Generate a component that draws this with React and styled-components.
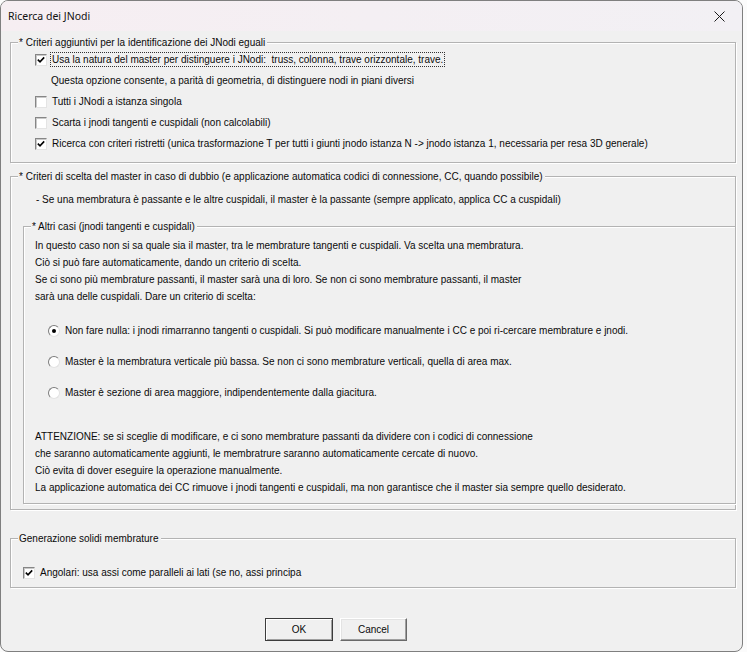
import styled, { createGlobalStyle } from "styled-components";

const GlobalStyle = createGlobalStyle`
  html, body {
    margin: 0;
    padding: 0;
  }
  body {
    background: #fbfbfb;
    font-family: "Liberation Sans", Arial, sans-serif;
    color: #000;
  }
  * {
    box-sizing: border-box;
  }
`;

const Window = styled.div`
  width: 743px;
  height: 652px;
  border: 1px solid #7f7f7f;
  border-radius: 8px;
  overflow: hidden;
  display: flex;
  flex-direction: column;
  background: #f0f0f0;
`;

const TitleBar = styled.div`
  height: 30px;
  flex: none;
  display: flex;
  align-items: center;
  justify-content: space-between;
  padding-left: 7px;
  background: linear-gradient(90deg, #f6eef2, #f2f0f4);
`;

const Title = styled.span`
  font-family: "Noto Sans", "Liberation Sans", sans-serif;
  font-size: 10.5px;
  color: #111;
`;

const CloseButton = styled.div`
  width: 46px;
  height: 30px;
  display: flex;
  align-items: center;
  justify-content: center;
`;

const Body = styled.div`
  flex: 1;
  display: flex;
  flex-direction: column;
  padding: 0 6px 0 9px;
  font-size: 10px;
  color: #0a0a0a;
`;

const Group = styled.fieldset`
  margin: ${(p) => p.$mt}px ${(p) => p.$mr || 0}px 0 0;
  padding: 0;
  min-width: 0;
  border: 1px solid #b3b3b3;
  box-shadow: inset 1px 1px 0 #fff, 1px 1px 0 #fff;
`;

const Legend = styled.legend`
  margin-left: 7px;
  padding: 0 2px 0 1px;
  line-height: 13px;
  background: #f0f0f0;
`;

const GroupContent = styled.div`
  padding: ${(p) => p.$pt}px 0 ${(p) => p.$pb}px ${(p) => p.$pl}px;
  display: flex;
  flex-direction: column;
`;

const Row = styled.div`
  height: ${(p) => p.$h || 21}px;
  display: flex;
  align-items: center;
  padding-left: ${(p) => p.$indent || 0}px;
  white-space: nowrap;
`;

const TextLine = styled.div`
  height: 17px;
  line-height: 17px;
  white-space: nowrap;
  padding-left: ${(p) => p.$indent || 0}px;
`;

const Paragraph = styled.div`
  margin-top: ${(p) => p.$mt || 0}px;
`;

const Box = styled.span`
  width: 12px;
  height: 12px;
  flex: none;
  margin-right: 4px;
  background: #fff;
  border: 1px solid;
  border-color: #868686 #e4e4e4 #e4e4e4 #868686;
  box-shadow: inset 1px 1px 0 #c9c9c9;
  display: flex;
  align-items: center;
  justify-content: center;
`;

const Radio = styled.span`
  width: 12px;
  height: 12px;
  flex: none;
  margin-right: 4px;
  border-radius: 50%;
  background: #fff;
  border: 1px solid;
  border-color: #7c7c7c #e2e2e2 #e2e2e2 #7c7c7c;
  display: flex;
  align-items: center;
  justify-content: center;
  &::after {
    content: "";
    width: 4px;
    height: 4px;
    border-radius: 50%;
    background: ${(p) => (p.$on ? "#000" : "transparent")};
  }
`;

const Label = styled.span`
  line-height: 13px;
  padding: 0 1px;
  outline: ${(p) => (p.$focus ? "1px dotted #333" : "none")};
  outline-offset: 0;
`;

const Buttons = styled.div`
  margin-top: 30px;
  padding-left: 255px;
  display: flex;
  gap: 7px;
`;

const Button = styled.div`
  width: ${(p) => p.$w}px;
  height: 23px;
  display: flex;
  align-items: center;
  justify-content: center;
  background: #f0f0f0;
  border: 1px solid;
  border-color: ${(p) =>
    p.$default ? "#3c3c3c" : "#ffffff #696969 #696969 #ffffff"};
  box-shadow: ${(p) =>
    p.$default
      ? "inset 1px 1px 0 #fff, inset -1px -1px 0 #a0a0a0"
      : "inset -1px -1px 0 #a0a0a0, inset 1px 1px 0 #e3e3e3"};
`;

function Check({ checked }) {
  return (
    <Box>
      {checked && (
        <svg width="8" height="8" viewBox="0 0 8 8">
          <path d="M0.8 3.6 L3 5.8 L7.2 1.4" fill="none" stroke="#000" strokeWidth="1.6" />
        </svg>
      )}
    </Box>
  );
}

function CheckRow({ checked, focus, children }) {
  return (
    <Row>
      <Check checked={checked} />
      <Label $focus={focus}>{children}</Label>
    </Row>
  );
}

function RadioRow({ on, children }) {
  return (
    <Row $h={31} $indent={13}>
      <Radio $on={on} />
      <Label>{children}</Label>
    </Row>
  );
}

export default function App() {
  return (
    <>
      <GlobalStyle />
      <Window>
        <TitleBar>
          <Title>Ricerca dei JNodi</Title>
          <CloseButton>
            <svg width="11" height="11" viewBox="0 0 11 11">
              <path d="M0.5 0.5 L10.5 10.5 M10.5 0.5 L0.5 10.5" stroke="#1a1a1a" strokeWidth="1" />
            </svg>
          </CloseButton>
        </TitleBar>
        <Body>
          <Group $mt={5}>
            <Legend>* Criteri aggiuntivi per la identificazione dei JNodi eguali</Legend>
            <GroupContent $pt={0} $pb={8} $pl={24}>
              <CheckRow checked focus>
                Usa la natura del master per distinguere i JNodi:&nbsp; truss, colonna, trave orizzontale, trave.
              </CheckRow>
              <Row $indent={16}>
                Questa opzione consente, a parità di geometria, di distinguere nodi in piani diversi
              </Row>
              <CheckRow>Tutti i JNodi a istanza singola</CheckRow>
              <CheckRow>Scarta i jnodi tangenti e cuspidali (non calcolabili)</CheckRow>
              <CheckRow checked>
                Ricerca con criteri ristretti (unica trasformazione T per tutti i giunti jnodo istanza N -&gt; jnodo istanza 1, necessaria per resa 3D generale)
              </CheckRow>
            </GroupContent>
          </Group>

          <Group $mt={7}>
            <Legend>
              * Criteri di scelta del master in caso di dubbio (e applicazione automatica codici di connessione, CC, quando possibile)
            </Legend>
            <GroupContent $pt={8} $pb={5} $pl={12}>
              <TextLine $indent={13}>
                - Se una membratura è passante e le altre cuspidali, il master è la passante (sempre applicato, applica CC a cuspidali)
              </TextLine>
              <Group $mt={12} $mr={-1}>
                <Legend>* Altri casi (jnodi tangenti e cuspidali)</Legend>
                <GroupContent $pt={4} $pb={7} $pl={11}>
                  <Paragraph>
                    <TextLine>
                      In questo caso non si sa quale sia il master, tra le membrature tangenti e cuspidali. Va scelta una membratura.
                    </TextLine>
                    <TextLine>Ciò si può fare automaticamente, dando un criterio di scelta.</TextLine>
                    <TextLine>
                      Se ci sono più membrature passanti, il master sarà una di loro. Se non ci sono membrature passanti, il master
                    </TextLine>
                    <TextLine>sarà una delle cuspidali. Dare un criterio di scelta:</TextLine>
                  </Paragraph>
                  <Paragraph $mt={10}>
                    <RadioRow on>
                      Non fare nulla: i jnodi rimarranno tangenti o cuspidali. Si può modificare manualmente i CC e poi ri-cercare membrature e jnodi.
                    </RadioRow>
                    <RadioRow>
                      Master è la membratura verticale più bassa. Se non ci sono membrature verticali, quella di area max.
                    </RadioRow>
                    <RadioRow>Master è sezione di area maggiore, indipendentemente dalla giacitura.</RadioRow>
                  </Paragraph>
                  <Paragraph $mt={20}>
                    <TextLine>
                      ATTENZIONE: se si sceglie di modificare, e ci sono membrature passanti da dividere con i codici di connessione
                    </TextLine>
                    <TextLine>
                      che saranno automaticamente aggiunti, le membratrure saranno automaticamente cercate di nuovo.
                    </TextLine>
                    <TextLine>Ciò evita di dover eseguire la operazione manualmente.</TextLine>
                    <TextLine>
                      La applicazione automatica dei CC rimuove i jnodi tangenti e cuspidali, ma non garantisce che il master sia sempre quello desiderato.
                    </TextLine>
                  </Paragraph>
                </GroupContent>
              </Group>
            </GroupContent>
          </Group>

          <Group $mt={22}>
            <Legend>Generazione solidi membrature</Legend>
            <GroupContent $pt={17} $pb={4} $pl={12}>
              <CheckRow checked>Angolari: usa assi come paralleli ai lati (se no, assi principa</CheckRow>
            </GroupContent>
          </Group>

          <Buttons>
            <Button $w={68} $default>OK</Button>
            <Button $w={67}>Cancel</Button>
          </Buttons>
        </Body>
      </Window>
    </>
  );
}
